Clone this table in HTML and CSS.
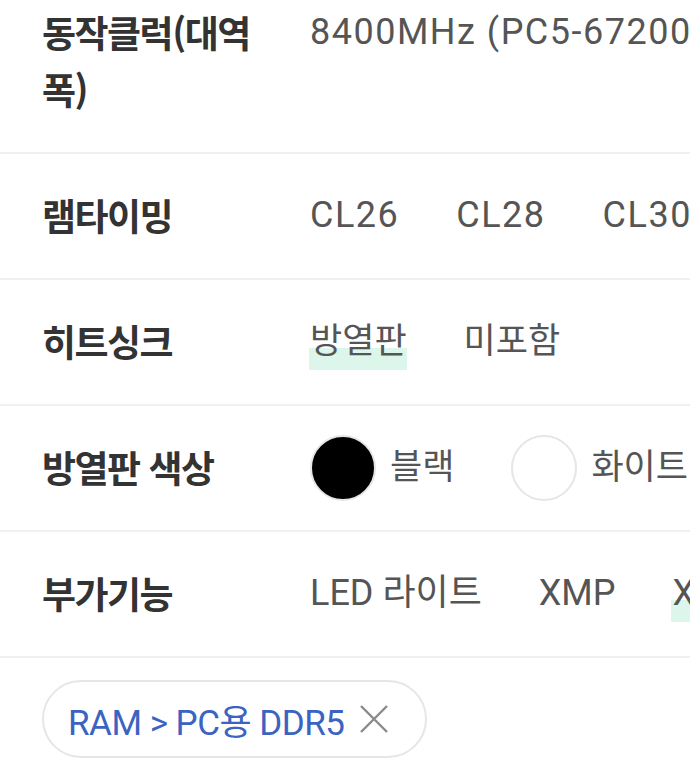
FILE: index.html
```html
<!DOCTYPE html>
<html lang="ko">
<head>
    <meta charset="utf-8">
    <meta name="viewport" content="width=device-width, initial-scale=1">
    <title>상세 검색</title>
    <link rel="stylesheet" href="styles.css">
</head>
<body>
    <div class="spec_list">
        <div class="spec_row">
            <div class="spec_name">동작클럭(대역폭)</div>
            <ul class="spec_opts">
                <li class="num">8400MHz (PC5-67200)</li>
                <li class="num">8000MHz (PC5-64000)</li>
            </ul>
        </div>
        <div class="spec_row">
            <div class="spec_name">램타이밍</div>
            <ul class="spec_opts">
                <li class="num">CL26</li>
                <li class="num">CL28</li>
                <li class="num">CL30</li>
                <li class="num">CL32</li>
            </ul>
        </div>
        <div class="spec_row">
            <div class="spec_name">히트싱크</div>
            <ul class="spec_opts">
                <li class="ko on">방열판</li>
                <li class="ko">미포함</li>
            </ul>
        </div>
        <div class="spec_row">
            <div class="spec_name">방열판 색상</div>
            <ul class="spec_opts">
                <li class="ko"><span class="swatch black"></span>블랙</li>
                <li class="ko"><span class="swatch white"></span>화이트</li>
            </ul>
        </div>
        <div class="spec_row">
            <div class="spec_name">부가기능</div>
            <ul class="spec_opts">
                <li>LED 라이트</li>
                <li>XMP</li>
                <li class="on">XMP3.0</li>
            </ul>
        </div>
    </div>

    <div class="chips">
        <button class="chip">RAM &gt; PC용 DDR5
            <svg width="30" height="30" viewBox="0 0 30 30"><path d="M2 2 L28 28 M28 2 L2 28" stroke="#8a8a8a" stroke-width="2.4" fill="none"/></svg>
        </button>
    </div>
</body>
</html>
```
FILE: styles.css
```css
body{
    margin: 0;
    background: white;
    font-family: Roboto, "Noto Sans CJK KR", sans-serif;
    overflow: hidden;
}

.spec_list{
    margin-top: -29px;
}

.spec_row{
    display: flex;
    align-items: flex-start;
    padding: 33px 0 34px 42px;
    border-bottom: 2px solid #f0f0f0;
    line-height: 57px;
}

.spec_name{
    flex: 0 0 222px;
    margin-right: 46px;
    font-family: "Noto Sans CJK KR", sans-serif;
    font-weight: bold;
    font-size: 37px;
    letter-spacing: -1.5px;
    color: #333;
}

.spec_opts{
    display: flex;
    gap: 57px;
    margin: 0;
    padding: 0;
    list-style: none;
    white-space: nowrap;
    font-size: 36px;
    color: #555;
}

.spec_opts li{
    position: relative;
    display: flex;
    align-items: center;
    height: 57px;
}

.spec_opts li.ko{
    font-size: 35px;
}

.spec_opts li.num{
    letter-spacing: 1.5px;
}

/* 선택된 항목 밑줄 형광펜 */
.spec_opts li.on::after{
    content: "";
    position: absolute;
    left: -1px;
    right: 0;
    bottom: 0;
    height: 22px;
    background: #dcf6ec;
    z-index: -1;
}

.swatch{
    flex: none;
    width: 62px;
    height: 62px;
    margin-right: 14px;
    border-radius: 50%;
    border: 2px solid #e6e6e6;
}
.swatch.black{
    background: black;
}
.swatch.white{
    background: white;
}

.chips{
    padding: 22px 42px;
}

.chip{
    display: inline-flex;
    align-items: center;
    gap: 14px;
    height: 78px;
    padding: 0 36px 0 24px;
    border: 2px solid #e6e6e6;
    border-radius: 40px;
    background: white;
    font-family: Roboto, "Noto Sans CJK KR", sans-serif;
    font-size: 35px;
    letter-spacing: -0.5px;
    color: #3a63c2;
}
```
